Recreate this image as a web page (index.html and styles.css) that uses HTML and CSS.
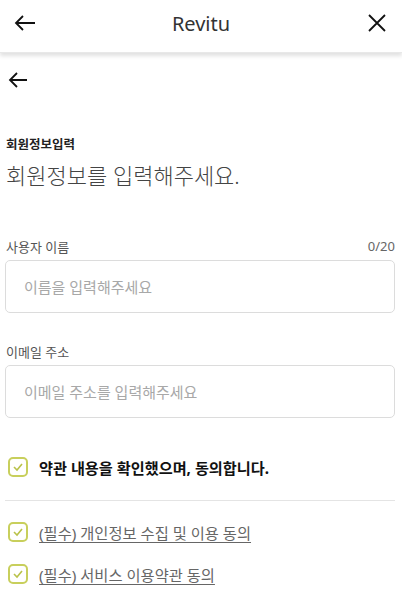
FILE: index.html
```html
<!DOCTYPE html>
<html lang="ko">
<head>
    <meta charset="utf-8">
    <link rel="stylesheet" href="styles.css">
</head>
<body>
    <div class="topbar">
        <div class="topbtn">
            <svg width="22" height="16" viewBox="0 0 22 16"><path d="M21 8H2M9 1L2 8l7 7" fill="none" stroke="#111" stroke-width="1.8"/></svg>
        </div>
        <div class="toptitle">Revitu</div>
        <div class="topbtn">
            <svg width="18" height="18" viewBox="0 0 18 18"><path d="M1 1l16 16M17 1L1 17" fill="none" stroke="#111" stroke-width="1.8"/></svg>
        </div>
    </div>

    <div class="page">
        <div class="back">
            <svg width="20" height="16" viewBox="0 0 20 16"><path d="M19 8H2M9 1L2 8l7 7" fill="none" stroke="#111" stroke-width="1.8"/></svg>
        </div>

        <div class="step">회원정보입력</div>
        <div class="heading">회원정보를 입력해주세요.</div>

        <div class="field">
            <div class="fieldhead">
                <span class="label">사용자 이름</span>
                <span class="count">0/20</span>
            </div>
            <input class="inp" type="text" placeholder="이름을 입력해주세요">
        </div>

        <div class="field">
            <div class="fieldhead">
                <span class="label">이메일 주소</span>
            </div>
            <input class="inp" type="text" placeholder="이메일 주소를 입력해주세요">
        </div>

        <div class="agree all">
            <span class="chk"><svg width="12" height="10" viewBox="0 0 12 10"><path d="M2 5l3 3 5-6" fill="none" stroke="#b9c24a" stroke-width="1.6"/></svg></span>
            <span class="alltxt">약관 내용을 확인했으며, 동의합니다.</span>
        </div>
        <div class="line"></div>
        <div class="agree">
            <span class="chk"><svg width="12" height="10" viewBox="0 0 12 10"><path d="M2 5l3 3 5-6" fill="none" stroke="#b9c24a" stroke-width="1.6"/></svg></span>
            <a class="term">(필수) 개인정보 수집 및 이용 동의</a>
        </div>
        <div class="agree">
            <span class="chk"><svg width="12" height="10" viewBox="0 0 12 10"><path d="M2 5l3 3 5-6" fill="none" stroke="#b9c24a" stroke-width="1.6"/></svg></span>
            <a class="term">(필수) 서비스 이용약관 동의</a>
        </div>
    </div>
</body>
</html>
```

FILE: styles.css
```css
body {
    margin: 0;
    font-family: "Noto Sans", "Noto Sans CJK KR", sans-serif;
    color: #222;
    background: #fff;
}
.topbar {
    height: 46px;
    display: flex;
    align-items: center;
    justify-content: space-between;
    padding: 0 14px 6px 14px;
    box-shadow: 0 3px 4px rgba(0, 0, 0, 0.12);
    border-bottom: 1px solid #e8e8e8;
}
.topbtn {
    width: 22px;
    display: flex;
    align-items: center;
    justify-content: center;
}
.toptitle {
    font-size: 20px;
    color: #333;
}
.page {
    padding: 0 7px 0 5px;
}
.back {
    margin-top: 18px;
    padding-left: 3px;
    height: 16px;
}
.step {
    margin-top: 47px;
    padding-left: 1px;
    font-size: 12.5px;
    font-weight: bold;
    color: #222;
}
.heading {
    margin-top: 5px;
    padding-left: 1px;
    font-size: 22px;
    font-weight: 300;
    color: #444;
    line-height: 34px;
}
.field {
    margin-top: 45px;
}
.field + .field {
    margin-top: 29px;
}
.fieldhead {
    display: flex;
    justify-content: space-between;
    font-size: 13px;
    color: #555;
    padding: 0 0 4px 1px;
}
.count {
    color: #666;
}
.inp {
    box-sizing: border-box;
    display: block;
    width: 100%;
    height: 53px;
    border: 1px solid #dcdcdc;
    border-radius: 5px;
    padding: 0 18px;
    font-family: "Noto Sans", "Noto Sans CJK KR", sans-serif;
    font-size: 15px;
    outline: none;
}
.inp::placeholder {
    color: #a8a8a8;
}
.agree {
    display: flex;
    align-items: center;
    gap: 11px;
    margin-top: 20px;
    padding-left: 3px;
}
.agree.all {
    margin-top: 38px;
}
.chk {
    box-sizing: border-box;
    width: 20px;
    height: 20px;
    border: 2px solid #c8cf5c;
    border-radius: 5px;
    display: flex;
    align-items: center;
    justify-content: center;
}
.alltxt {
    font-size: 15.2px;
    font-weight: bold;
    color: #111;
}
.line {
    height: 1px;
    background: #e4e4e4;
    margin-top: 22px;
    margin-bottom: 5px;
}
.term {
    font-size: 15.3px;
    color: #666;
    text-decoration: underline;
    text-underline-offset: 3px;
}
```
